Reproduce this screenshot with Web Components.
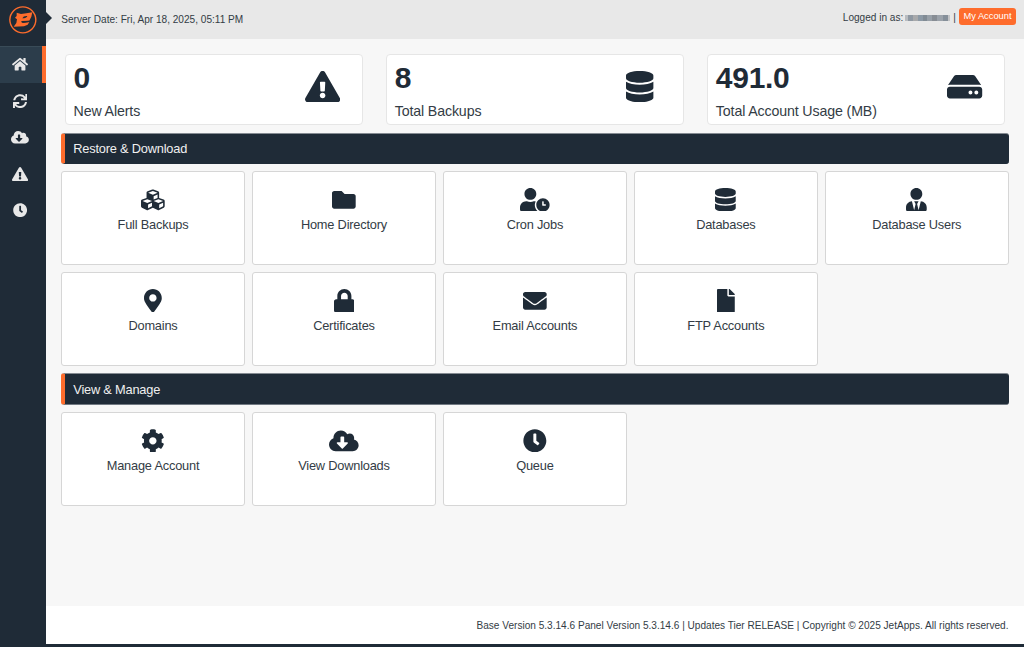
<!DOCTYPE html>
<html lang="en">
<head>
<meta charset="utf-8">
<title>JetBackup</title>
<style>
    html, body {
        margin: 0;
        height: 100%;
        background: #f7f7f7;
        color: #333c45;
        font-family: "Liberation Sans", Arial, sans-serif;
        font-size: 10.08px;
    }
    body {
        overflow: hidden;
    }
</style>
</head>
<body>
<jet-app>
    <jet-sidebar slot="sidebar">
        <jet-nav icon="home" active></jet-nav>
        <jet-nav icon="sync"></jet-nav>
        <jet-nav icon="cloud"></jet-nav>
        <jet-nav icon="alert"></jet-nav>
        <jet-nav icon="clock"></jet-nav>
    </jet-sidebar>
    <jet-header slot="header">
        Server Date: Fri, Apr 18, 2025, 05:11 PM
        <span slot="user">Logged in as:</span>
        <span slot="account">My Account</span>
    </jet-header>
    <jet-stats>
        <jet-stat icon="alert" value="0">New Alerts</jet-stat>
        <jet-stat icon="database" value="8">Total Backups</jet-stat>
        <jet-stat icon="hdd" value="491.0">Total Account Usage (MB)</jet-stat>
    </jet-stats>
    <jet-section name="Restore &amp; Download">
        <jet-tile icon="cubes">Full Backups</jet-tile>
        <jet-tile icon="folder">Home Directory</jet-tile>
        <jet-tile icon="userclock">Cron Jobs</jet-tile>
        <jet-tile icon="database">Databases</jet-tile>
        <jet-tile icon="usertie">Database Users</jet-tile>
        <jet-tile icon="marker">Domains</jet-tile>
        <jet-tile icon="lock">Certificates</jet-tile>
        <jet-tile icon="envelope">Email Accounts</jet-tile>
        <jet-tile icon="file">FTP Accounts</jet-tile>
    </jet-section>
    <jet-section name="View &amp; Manage" style="--bar-height: 32px; --bar-bottom: #717982">
        <jet-tile icon="cog">Manage Account</jet-tile>
        <jet-tile icon="cloud">View Downloads</jet-tile>
        <jet-tile icon="clock">Queue</jet-tile>
    </jet-section>
    <jet-footer slot="footer">Base Version 5.3.14.6 Panel Version 5.3.14.6 | Updates Tier RELEASE | Copyright © 2025 JetApps. All rights reserved.</jet-footer>
</jet-app>

<script>
// [width, path], all on a 512 high box
const icons = {
    home: [576, 'M280.37 148.26L96 300.11V464a16 16 0 0 0 16 16l112.06-.29a16 16 0 0 0 15.92-16V368a16 16 0 0 1 16-16h64a16 16 0 0 1 16 16v95.64a16 16 0 0 0 16 16.05L464 480a16 16 0 0 0 16-16V300L295.67 148.26a12.19 12.19 0 0 0-15.3 0zM571.6 251.47L488 182.56V44.05a12 12 0 0 0-12-12h-56a12 12 0 0 0-12 12v72.61L318.47 43a48 48 0 0 0-61 0L4.34 251.47a12 12 0 0 0-1.6 16.9l25.5 31A12 12 0 0 0 45.15 301l235.22-193.74a12.19 12.19 0 0 1 15.3 0L530.9 301a12 12 0 0 0 16.9-1.6l25.5-31a12 12 0 0 0-1.7-16.93z'],
    sync: [512, 'M440.65 12.57l4 82.77A247.16 247.16 0 0 0 255.83 8C134.73 8 33.91 94.92 12.29 209.82A12 12 0 0 0 24.09 224h49.05a12 12 0 0 0 11.67-9.26 175.91 175.91 0 0 1 317-56.94l-101.46-4.86a12 12 0 0 0-12.57 12v47.41a12 12 0 0 0 12 12H500a12 12 0 0 0 12-12V12a12 12 0 0 0-12-12h-47.37a12 12 0 0 0-11.98 12.57zM255.83 432a175.61 175.61 0 0 1-146-77.8l101.8 4.87a12 12 0 0 0 12.57-12v-47.4a12 12 0 0 0-12-12H12a12 12 0 0 0-12 12V500a12 12 0 0 0 12 12h47.35a12 12 0 0 0 12-12.6l-4.15-82.57A247.17 247.17 0 0 0 255.83 504c121.11 0 221.93-86.92 243.55-201.82a12 12 0 0 0-11.8-14.18h-49.05a12 12 0 0 0-11.67 9.26A175.86 175.86 0 0 1 255.83 432z'],
    cloud: [640, 'M537.6 226.6c4.1-10.7 6.4-22.4 6.4-34.6 0-53-43-96-96-96-19.7 0-38.1 6-53.3 16.2C367 64.2 315.3 32 256 32c-88.4 0-160 71.6-160 160 0 2.7.1 5.4.2 8.1C40.2 219.8 0 273.2 0 336c0 79.5 64.5 144 144 144h368c70.7 0 128-57.3 128-128 0-61.9-44-113.6-102.4-125.4zm-132.9 88.7L299.3 420.7c-6.2 6.2-16.4 6.2-22.6 0L171.3 315.3c-10.1-10.1-2.9-27.3 11.3-27.3H248V176c0-8.8 7.2-16 16-16h48c8.8 0 16 7.2 16 16v112h65.4c14.2 0 21.4 17.2 11.3 27.3z'],
    alert: [576, 'M569.517 440.013C587.975 472.007 564.806 512 527.94 512H48.054c-36.937 0-59.999-40.055-41.577-71.987L246.423 23.985c18.467-32.009 64.72-31.951 83.154 0l239.94 416.028zM288 354c-25.405 0-46 20.595-46 46s20.595 46 46 46 46-20.595 46-46-20.595-46-46-46zm-43.673-165.346l7.418 136c.347 6.364 5.609 11.346 11.982 11.346h48.546c6.373 0 11.635-4.982 11.982-11.346l7.418-136c.375-6.874-5.098-12.654-11.982-12.654h-63.383c-6.884 0-12.356 5.78-11.981 12.654z'],
    clock: [512, 'M256,8C119,8,8,119,8,256S119,504,256,504,504,393,504,256,393,8,256,8Zm92.49,313h0l-20,25a16,16,0,0,1-22.49,2.5h0l-67-49.72a40,40,0,0,1-15-31.23V112a16,16,0,0,1,16-16h32a16,16,0,0,1,16,16V256l58,42.5A16,16,0,0,1,348.49,321Z'],
    database: [448, 'M448 73.143v45.714C448 159.143 347.667 192 224 192S0 159.143 0 118.857V73.143C0 32.857 100.333 0 224 0s224 32.857 224 73.143zM448 176v102.857C448 319.143 347.667 352 224 352S0 319.143 0 278.857V176c48.125 33.143 136.208 48.572 224 48.572S399.874 209.143 448 176zm0 160v102.857C448 479.143 347.667 512 224 512S0 479.143 0 438.857V336c48.125 33.143 136.208 48.572 224 48.572S399.874 369.143 448 336z'],
    hdd: [576, 'M576 304v96c0 26.51-21.49 48-48 48H48c-26.51 0-48-21.49-48-48v-96c0-26.51 21.49-48 48-48h480c26.51 0 48 21.49 48 48zm-48-80a79.557 79.557 0 0 1 30.777 6.165L462.25 85.374A48.003 48.003 0 0 0 422.311 64H153.689a48 48 0 0 0-39.938 21.374L17.223 230.165A79.557 79.557 0 0 1 48 224h480zm-48 96c-17.673 0-32 14.327-32 32s14.327 32 32 32 32-14.327 32-32-14.327-32-32-32zm-96 0c-17.673 0-32 14.327-32 32s14.327 32 32 32 32-14.327 32-32-14.327-32-32-32z'],
    cubes: [512, 'M488.6 250.2L392 214V105.5c0-15-9.3-28.4-23.4-33.7l-100-37.5c-8.1-3.1-17.1-3.1-25.3 0l-100 37.5c-14.1 5.3-23.4 18.7-23.4 33.7V214l-96.6 36.2C9.3 255.5 0 268.9 0 283.9V394c0 13.6 7.7 26.1 19.9 32.2l100 50c10.1 5.1 22.1 5.1 32.2 0l103.9-52 103.9 52c10.1 5.1 22.1 5.1 32.2 0l100-50c12.2-6.1 19.9-18.6 19.9-32.2V283.9c0-15-9.3-28.4-23.4-33.7zM358 214.8l-85 31.9v-68.2l85-37v73.3zM154 104.1l102-38.2 102 38.2v.6l-102 41.4-102-41.4v-.6zm84 291.1l-85 42.5v-79.1l85-38.8v75.4zm0-112l-102 41.4-102-41.4v-.6l102-38.2 102 38.2v.6zm240 112l-85 42.5v-79.1l85-38.8v75.4zm0-112l-102 41.4-102-41.4v-.6l102-38.2 102 38.2v.6z'],
    folder: [512, 'M464 128H272l-64-64H48C21.49 64 0 85.49 0 112v288c0 26.51 21.49 48 48 48h416c26.51 0 48-21.49 48-48V176c0-26.51-21.49-48-48-48z'],
    userclock: [640, 'M496 224c-79.6 0-144 64.4-144 144s64.4 144 144 144 144-64.4 144-144-64.4-144-144-144zm64 150.3c0 5.3-4.4 9.7-9.7 9.7h-60.6c-5.3 0-9.7-4.4-9.7-9.7v-76.6c0-5.3 4.4-9.7 9.7-9.7h12.6c5.3 0 9.7 4.4 9.7 9.7V352h38.3c5.3 0 9.7 4.4 9.7 9.7v12.6zM320 368c0-27.8 6.7-54.1 18.2-77.5-8-1.5-16.2-2.5-24.6-2.5h-16.7c-22.2 10.2-46.9 16-72.9 16s-50.6-5.8-72.9-16h-16.7C60.2 288 0 348.2 0 422.4V464c0 26.5 21.5 48 48 48h347.1c-45.3-31.9-75.1-84.5-75.1-144zm-96-112c70.7 0 128-57.3 128-128S294.7 0 224 0 96 57.3 96 128s57.3 128 128 128z'],
    usertie: [448, 'M224 256c70.7 0 128-57.3 128-128S294.7 0 224 0 96 57.3 96 128s57.3 128 128 128zm95.8 32.6L272 480l-32-136 32-56h-96l32 56-32 136-47.8-191.4C56.9 292 0 350.3 0 422.4V464c0 26.5 21.5 48 48 48h352c26.5 0 48-21.5 48-48v-41.6c0-72.1-56.9-130.4-128.2-133.8z'],
    marker: [384, 'M172.268 501.67C26.97 291.031 0 269.413 0 192 0 85.961 85.961 0 192 0s192 85.961 192 192c0 77.413-26.97 99.031-172.268 309.67-9.535 13.774-29.93 13.773-39.464 0zM192 272c44.183 0 80-35.817 80-80s-35.817-80-80-80-80 35.817-80 80 35.817 80 80 80z'],
    lock: [448, 'M400 224h-24v-72C376 68.2 307.8 0 224 0S72 68.2 72 152v72H48c-26.5 0-48 21.5-48 48v192c0 26.5 21.5 48 48 48h352c26.5 0 48-21.5 48-48V272c0-26.5-21.5-48-48-48zm-104 0H152v-72c0-39.7 32.3-72 72-72s72 32.3 72 72v72z'],
    envelope: [512, 'M502.3 190.8c3.9-3.1 9.7-.2 9.7 4.7V400c0 26.5-21.5 48-48 48H48c-26.5 0-48-21.5-48-48V195.6c0-5 5.7-7.8 9.7-4.7 22.4 17.4 52.1 39.5 154.1 113.6 21.1 15.4 56.7 47.8 92.2 47.6 35.7.3 72-32.8 92.3-47.6 102-74.1 131.6-96.3 154-113.7zM256 320c23.2.4 56.6-29.2 73.4-41.4 132.7-96.3 142.8-104.7 173.4-128.7 5.8-4.5 9.2-11.5 9.2-18.9v-19c0-26.5-21.5-48-48-48H48c-26.5 0-48 21.5-48 48v19c0 7.4 3.4 14.3 9.2 18.9 30.6 23.9 40.7 32.4 173.4 128.7 16.8 12.2 50.2 41.8 73.4 41.4z'],
    file: [384, 'M224 136V0H24C10.7 0 0 10.7 0 24v464c0 13.3 10.7 24 24 24h336c13.3 0 24-10.7 24-24V160H248c-13.2 0-24-10.8-24-24zm160-14.1v6.1H256V0h6.1c6.4 0 12.5 2.5 17 7l97.9 98c4.5 4.5 7 10.6 7 16.9z'],
    cog: [512, 'M487.4 315.7l-42.6-24.6c4.3-23.2 4.3-47 0-70.2l42.6-24.6c4.9-2.8 7.1-8.6 5.5-14-11.1-35.6-30-67.8-54.7-94.6-3.8-4.1-10-5.1-14.8-2.3L380.8 110c-17.9-15.4-38.5-27.3-60.8-35.1V25.8c0-5.6-3.9-10.5-9.4-11.7-36.7-8.2-74.3-7.8-109.2 0-5.5 1.2-9.4 6.1-9.4 11.7V75c-22.2 7.9-42.8 19.8-60.8 35.1L88.7 85.5c-4.9-2.8-11-1.9-14.8 2.3-24.7 26.7-43.6 58.9-54.7 94.6-1.7 5.4.6 11.2 5.5 14L67.3 221c-4.3 23.2-4.3 47 0 70.2l-42.6 24.6c-4.9 2.8-7.1 8.6-5.5 14 11.1 35.6 30 67.8 54.7 94.6 3.8 4.1 10 5.1 14.8 2.3l42.6-24.6c17.9 15.4 38.5 27.3 60.8 35.1v49.2c0 5.6 3.9 10.5 9.4 11.7 36.7 8.2 74.3 7.8 109.2 0 5.5-1.2 9.4-6.1 9.4-11.7v-49.2c22.2-7.9 42.8-19.8 60.8-35.1l42.6 24.6c4.9 2.8 11 1.9 14.8-2.3 24.7-26.7 43.6-58.9 54.7-94.6 1.5-5.5-.7-11.3-5.6-14.1zM256 336c-44.1 0-80-35.9-80-80s35.9-80 80-80 80 35.9 80 80-35.9 80-80 80z']
};

class JetElement extends HTMLElement {
    constructor() {
        super();
        this.attachShadow({ mode: 'open' });
    }
    connectedCallback() {
        this.shadowRoot.innerHTML = this.render();
    }
}

class JetIcon extends JetElement {
    render() {
        const [width, path] = icons[this.getAttribute('name')];
        return `
            <style>
                :host { display: block; height: 1em; line-height: 0; }
                svg { display: block; height: 1em; width: ${width / 512}em; fill: currentColor; }
            </style>
            <svg viewBox="0 0 ${width} 512"><path d="${path}"/></svg>`;
    }
}

class JetApp extends JetElement {
    render() {
        return `
            <style>
                :host {
                    display: grid;
                    grid-template: 39px 1fr 38px / 46px 1fr;
                    box-sizing: border-box;
                    height: 647px;
                    border-bottom: 3px solid #1f2b37;
                }
                ::slotted([slot=sidebar]) { grid-row: 1 / 4; }
                main { padding: 15px 15.5px 0 15.3px; }
            </style>
            <slot name="sidebar"></slot>
            <slot name="header"></slot>
            <main><slot></slot></main>
            <slot name="footer"></slot>`;
    }
}

class JetSidebar extends JetElement {
    render() {
        return `
            <style>
                :host { display: block; position: relative; background: #1f2b37; color: #e8e8e8; }
                .logo { display: block; width: 46px; height: 46px; }
                .arrow {
                    position: absolute;
                    left: 46px;
                    top: 12px;
                    border: 6.5px solid transparent;
                    border-left-color: #1f2b37;
                    border-right: 0;
                }
                nav { display: flex; flex-direction: column; }
            </style>
            <svg class="logo" viewBox="0 0 138 138">
                <circle cx="68.5" cy="59.5" r="39" fill="none" stroke="#fe6c2c" stroke-width="4.2"/>
                <path fill="#fe6c2c" d="M50 38l13 4 16-2 18-3-3 13-6 12-18 2-1 4 19-2-5 8-11 5-31 1 8-11 2-11-6-5 5-5z"/>
                <path fill="#1f2b37" d="M67 55q3-8 15-7-2 7-15 7zM64 63l26-1-2 4-20 3q-5-1-4-6z"/>
            </svg>
            <div class="arrow"></div>
            <nav><slot></slot></nav>`;
    }
}

class JetNav extends JetElement {
    render() {
        return `
            <style>
                :host {
                    display: flex;
                    align-items: center;
                    justify-content: center;
                    box-sizing: border-box;
                    height: 36.5px;
                    padding-right: 2px;
                    border-right: 4px solid transparent;
                    font-size: 14.3px;
                }
                :host([active]) {
                    background: #2c3d4b;
                    border-right-color: #fe6c2c;
                    box-shadow: inset 0 1px #394b57;
                }
            </style>
            <jet-icon name="${this.getAttribute('icon')}"></jet-icon>`;
    }
}

class JetHeader extends JetElement {
    render() {
        return `
            <style>
                :host {
                    display: flex;
                    justify-content: space-between;
                    align-items: center;
                    box-sizing: border-box;
                    padding: 0 8px 0 15.3px;
                    background: #e8e8e8;
                }
                .right { display: flex; align-items: center; padding-bottom: 4px; }
                .name {
                    width: 45px;
                    height: 6px;
                    margin: 0 3px 0 2px;
                    background: linear-gradient(90deg, #b9bcc0 6%, #8f98a2 6% 17%, #a8a9ab 17% 28%, #8c99a5 28% 39%, #818b94 39% 50%, #98a0a8 50% 61%, #878d94 61% 72%, #9ba2aa 72% 84%, #858f99 84% 95%, #c3c4c6 95%);
                }
                .btn {
                    margin: -3px 0 0 3px;
                    padding: 0 4.5px;
                    font-size: 9.3px;
                    line-height: 17px;
                    border-radius: 3px;
                    background: #fe6c2c;
                    color: #fff;
                }
            </style>
            <div><slot></slot></div>
            <div class="right">
                <slot name="user"></slot><span class="name"></span>|
                <div class="btn"><slot name="account"></slot></div>
            </div>`;
    }
}

class JetStats extends JetElement {
    render() {
        return `
            <style>
                :host {
                    display: grid;
                    grid-template-columns: repeat(3, 1fr);
                    gap: 23.5px;
                    padding: 0 3.5px 0 3.8px;
                    margin-bottom: 8.5px;
                }
            </style>
            <slot></slot>`;
    }
}

class JetStat extends JetElement {
    render() {
        return `
            <style>
                :host {
                    display: grid;
                    grid-template-columns: 231.5px 1fr;
                    align-items: center;
                    box-sizing: border-box;
                    height: 70.5px;
                    padding: 4px 0 0 7.5px;
                    border: 1px solid #e6e6e6;
                    border-radius: 4px;
                    background: #fff;
                }
                .value { font-size: 30px; font-weight: bold; line-height: 34px; letter-spacing: -.3px; color: #1f2b37; }
                .label { font-size: 14.2px; line-height: 20px; letter-spacing: -.13px; margin-top: 6px; white-space: nowrap; }
                jet-icon { font-size: 31.3px; color: #1f2b37; margin-bottom: 9px; }
            </style>
            <div>
                <div class="value">${this.getAttribute('value')}</div>
                <div class="label"><slot></slot></div>
            </div>
            <jet-icon name="${this.getAttribute('icon')}"></jet-icon>`;
    }
}

class JetSection extends JetElement {
    render() {
        return `
            <style>
                :host { display: block; margin-bottom: 7px; }
                .bar {
                    display: flex;
                    align-items: center;
                    box-sizing: border-box;
                    height: var(--bar-height, 31px);
                    margin-bottom: 7px;
                    padding-left: 8px;
                    border: solid #1f2b37;
                    border-width: 1px 0 1px 4px;
                    border-color: #858b92 #1f2b37 var(--bar-bottom, #1f2b37) #fe6c2c;
                    border-radius: 3px;
                    background: #1f2b37;
                    color: #f0f0f0;
                    font-size: 12.8px;
                    letter-spacing: -.2px;
                }
                .tiles { display: grid; grid-template-columns: repeat(5, 1fr); gap: 7px 7.5px; }
            </style>
            <div class="bar">${this.getAttribute('name').replace('&', '&amp;')}</div>
            <div class="tiles"><slot></slot></div>`;
    }
}

class JetTile extends JetElement {
    render() {
        return `
            <style>
                :host {
                    display: flex;
                    flex-direction: column;
                    align-items: center;
                    box-sizing: border-box;
                    height: 94px;
                    padding-top: 15.5px;
                    border: 1px solid #d6d6d6;
                    border-radius: 3px;
                    background: #fff;
                    font-size: 12.8px;
                    letter-spacing: -.2px;
                }
                jet-icon { font-size: 23.7px; color: #1f2b37; }
                .label { margin-top: 6px; line-height: 16px; }
            </style>
            <jet-icon name="${this.getAttribute('icon')}"></jet-icon>
            <div class="label"><slot></slot></div>`;
    }
}

class JetFooter extends JetElement {
    render() {
        return `
            <style>
                :host {
                    display: flex;
                    align-items: center;
                    justify-content: flex-end;
                    padding-right: 15.5px;
                    background: #fff;
                }
            </style>
            <slot></slot>`;
    }
}

customElements.define('jet-icon', JetIcon);
customElements.define('jet-app', JetApp);
customElements.define('jet-sidebar', JetSidebar);
customElements.define('jet-nav', JetNav);
customElements.define('jet-header', JetHeader);
customElements.define('jet-stats', JetStats);
customElements.define('jet-stat', JetStat);
customElements.define('jet-section', JetSection);
customElements.define('jet-tile', JetTile);
customElements.define('jet-footer', JetFooter);
</script>
</body>
</html>
